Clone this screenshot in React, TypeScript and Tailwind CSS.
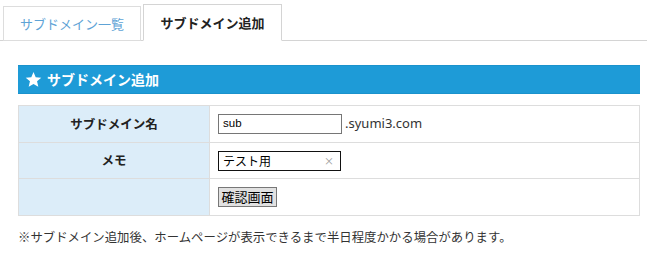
import React from "react";

export default function App() {
  const font = { fontFamily: '"Noto Sans CJK JP", "Noto Sans", sans-serif' };
  return (
    <div className="w-[647px] h-[253px] bg-white text-[#333]" style={font}>
      <div className="flex items-end pt-[5px] pl-[3px] border-b border-[#d4d4d4] h-[41px]">
        <div className="w-[138px] h-[35px] -mb-px border border-[#dddddd] flex items-center justify-center text-[13px] text-[#5ea3d6] bg-white">
          サブドメイン一覧
        </div>
        <div className="ml-[2px] w-[139px] h-[37px] -mb-px border border-[#d4d4d4] border-b-white flex items-center justify-center text-[13px] font-bold text-[#222] bg-white">
          サブドメイン追加
        </div>
      </div>
      <div className="pl-[18px] pr-[7px]">
        <div className="mt-[24px] h-[29px] bg-[#1e9bd7] flex items-center pl-[7px] text-white font-bold text-[14px] border-y border-[#1a92cc]">
          <svg width="17" height="17" viewBox="0 0 24 24" className="mr-[5px]">
            <path fill="white" d="M12 1.5l3.1 7.2 7.9.7-6 5.2 1.8 7.7L12 18.2 5.2 22.3 7 14.6 1 9.4l7.9-.7z" />
          </svg>
          サブドメイン追加
        </div>
        <table className="mt-[11px] w-full border-collapse text-[13px]">
          <tbody>
            <tr className="h-[37px]">
              <th className="w-[191px] bg-[#dcedf9] border border-[#dddddd] font-bold text-[12.5px] text-[#222]">サブドメイン名</th>
              <td className="border border-[#dddddd] pl-[8px]">
                <div className="flex items-center">
                  <div className="w-[124px] h-[20px] border border-[#767676] flex items-center px-[4px] text-[11.5px] text-black" style={{ fontFamily: '"Liberation Sans", sans-serif' }}>sub</div>
                  <span className="ml-[3px] text-[#333]" style={{ fontFamily: '"Noto Sans", sans-serif' }}>.syumi3.com</span>
                </div>
              </td>
            </tr>
            <tr className="h-[36px]">
              <th className="bg-[#dcedf9] border border-[#dddddd] font-bold text-[12.5px] text-[#222]">メモ</th>
              <td className="border border-[#dddddd] pl-[8px]">
                <div className="w-[123px] h-[20px] border border-[#111] flex items-center justify-between px-[4px] text-[12px] text-black">
                  <span>テスト用</span>
                  <span className="text-[10px] text-[#999] pr-[2px]">×</span>
                </div>
              </td>
            </tr>
            <tr className="h-[37px]">
              <th className="bg-[#dcedf9] border border-[#dddddd]"></th>
              <td className="border border-[#dddddd] pl-[8px]">
                <div className="w-[59px] h-[20px] bg-[#e1e1e1] border border-[#777] flex items-center justify-center text-[13px] text-black">確認画面</div>
              </td>
            </tr>
          </tbody>
        </table>
        <p className="mt-[12px] text-[12.4px] text-[#333]">※サブドメイン追加後、ホームページが表示できるまで半日程度かかる場合があります。</p>
      </div>
    </div>
  );
}
